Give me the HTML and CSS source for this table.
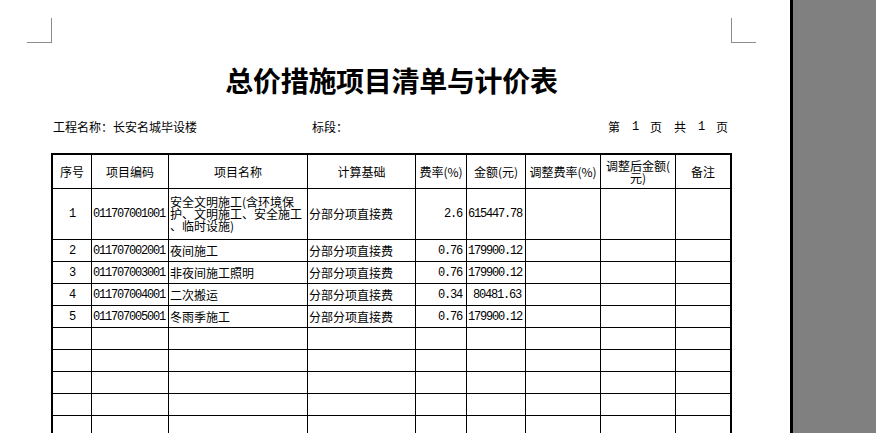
FILE: index.html
```html
<!DOCTYPE html>
<html lang="zh-CN">
<head>
<meta charset="utf-8">
<title>总价措施项目清单与计价表</title>
<link rel="stylesheet" href="styles.css">
</head>
<body>
<div class="viewer">
  <div class="page">
    <div class="marks">
      <span class="mark mark-left"></span>
      <span class="mark mark-right"></span>
    </div>
    <div class="sheet">
      <h1 class="title">总价措施项目清单与计价表</h1>
      <div class="info">
        <span class="info-name">工程名称：长安名城毕设楼</span>
        <span class="info-bid">标段：</span>
        <span class="info-page"><span>第</span><span class="num">1</span><span>页</span><span>共</span><span class="num">1</span><span>页</span></span>
      </div>
      <table class="list">
        <colgroup>
          <col class="c1"><col class="c2"><col class="c3"><col class="c4"><col class="c5"><col class="c6"><col class="c7"><col class="c8"><col class="c9">
        </colgroup>
        <thead>
          <tr class="r-head">
            <th>序号</th>
            <th>项目编码</th>
            <th>项目名称</th>
            <th>计算基础</th>
            <th>费率(%)</th>
            <th>金额(元)</th>
            <th>调整费率(%)</th>
            <th class="tight">调整后金额(<br>元)</th>
            <th class="last">备注</th>
          </tr>
        </thead>
        <tbody>
          <tr class="r-tall">
            <td class="center num">1</td>
            <td class="num">011707001001</td>
            <td class="wrap">安全文明施工(含环境保<br>护、文明施工、安全施工<br>、临时设施)</td>
            <td>分部分项直接费</td>
            <td class="right num">2.6</td>
            <td class="right num">615447.78</td>
            <td></td><td></td><td class="last"></td>
          </tr>
          <tr class="r">
            <td class="center num">2</td>
            <td class="num">011707002001</td>
            <td>夜间施工</td>
            <td>分部分项直接费</td>
            <td class="right num">0.76</td>
            <td class="right num">179900.12</td>
            <td></td><td></td><td class="last"></td>
          </tr>
          <tr class="r">
            <td class="center num">3</td>
            <td class="num">011707003001</td>
            <td>非夜间施工照明</td>
            <td>分部分项直接费</td>
            <td class="right num">0.76</td>
            <td class="right num">179900.12</td>
            <td></td><td></td><td class="last"></td>
          </tr>
          <tr class="r">
            <td class="center num">4</td>
            <td class="num">011707004001</td>
            <td>二次搬运</td>
            <td>分部分项直接费</td>
            <td class="right num">0.34</td>
            <td class="right num">80481.63</td>
            <td></td><td></td><td class="last"></td>
          </tr>
          <tr class="r">
            <td class="center num">5</td>
            <td class="num">011707005001</td>
            <td>冬雨季施工</td>
            <td>分部分项直接费</td>
            <td class="right num">0.76</td>
            <td class="right num">179900.12</td>
            <td></td><td></td><td class="last"></td>
          </tr>
          <tr class="r"><td></td><td></td><td></td><td></td><td></td><td></td><td></td><td></td><td class="last"></td></tr>
          <tr class="r"><td></td><td></td><td></td><td></td><td></td><td></td><td></td><td></td><td class="last"></td></tr>
          <tr class="r"><td></td><td></td><td></td><td></td><td></td><td></td><td></td><td></td><td class="last"></td></tr>
          <tr class="r"><td></td><td></td><td></td><td></td><td></td><td></td><td></td><td></td><td class="last"></td></tr>
          <tr class="r"><td></td><td></td><td></td><td></td><td></td><td></td><td></td><td></td><td class="last"></td></tr>
          <tr class="r"><td></td><td></td><td></td><td></td><td></td><td></td><td></td><td></td><td class="last"></td></tr>
        </tbody>
      </table>
    </div>
  </div>
  <div class="edge"></div>
  <div class="desk"></div>
</div>
</body>
</html>
```

FILE: styles.css
```css
html, body {
  margin: 0;
  padding: 0;
  height: 100%;
  overflow: hidden;
  background: #808080;
}

.viewer {
  display: flex;
  height: 433px;
  overflow: hidden;
}

.page {
  width: 790px;
  flex: 0 0 790px;
  height: 433px;
  background: #ffffff;
  overflow: hidden;
  font-family: "Noto Sans CJK SC", "Noto Sans", sans-serif;
  color: #000;
}

.edge {
  width: 3px;
  flex: 0 0 3px;
  background: #000;
}

.desk {
  flex: 1;
  background: #808080;
}

.marks {
  display: flex;
  justify-content: space-between;
  width: 729px;
  margin-left: 27px;
  padding-top: 18px;
  height: 25px;
}

.mark {
  display: block;
  width: 24px;
  height: 24px;
  border-bottom: 1px solid #8c8c8c;
}

.mark-left {
  border-right: 1px solid #8c8c8c;
}

.mark-right {
  border-left: 1px solid #8c8c8c;
}

.sheet {
  margin-left: 51px;
  width: 681px;
}

.title {
  margin: 21px 0 0 0;
  text-align: center;
  font-size: 28px;
  line-height: 32px;
  font-weight: 700;
  letter-spacing: -0.3px;
}

.info {
  display: flex;
  margin-top: 23px;
  padding: 0 4px 0 2px;
  font-size: 12px;
  line-height: 16px;
  height: 16px;
}

.info-name {
  width: 259px;
}

.info-page {
  margin-left: auto;
  display: flex;
  gap: 12px;
}

.num {
  font-family: "Liberation Mono", "DejaVu Sans Mono", monospace;
  font-size: 12px;
  letter-spacing: -1.2px;
}

.list {
  margin-top: 18px;
  border-collapse: separate;
  border-spacing: 0;
  border: 2px solid #000;
  table-layout: fixed;
  width: 681px;
  font-size: 12px;
  line-height: 14px;
}

.c1 { width: 39px; }
.c2 { width: 77px; }
.c3 { width: 139px; }
.c4 { width: 108px; }
.c5 { width: 51px; }
.c6 { width: 59px; }
.c7 { width: 75px; }
.c8 { width: 75px; }
.c9 { width: 54px; }

.list th,
.list td {
  padding: 0 1px;
  border-right: 1px solid #000;
  border-bottom: 1px solid #000;
  vertical-align: middle;
  text-align: left;
  white-space: nowrap;
  overflow: hidden;
}

.list th {
  font-weight: 400;
  text-align: center;
}

.list .last {
  border-right: 0;
}

.list .tight {
  line-height: 12px;
}

.list .wrap {
  line-height: 12px;
}

.list .center {
  text-align: center;
}

.list .right {
  text-align: right;
  padding-right: 4px;
}

.r-head { height: 34px; }
.r-tall { height: 51px; }
.r { height: 22px; }
```
